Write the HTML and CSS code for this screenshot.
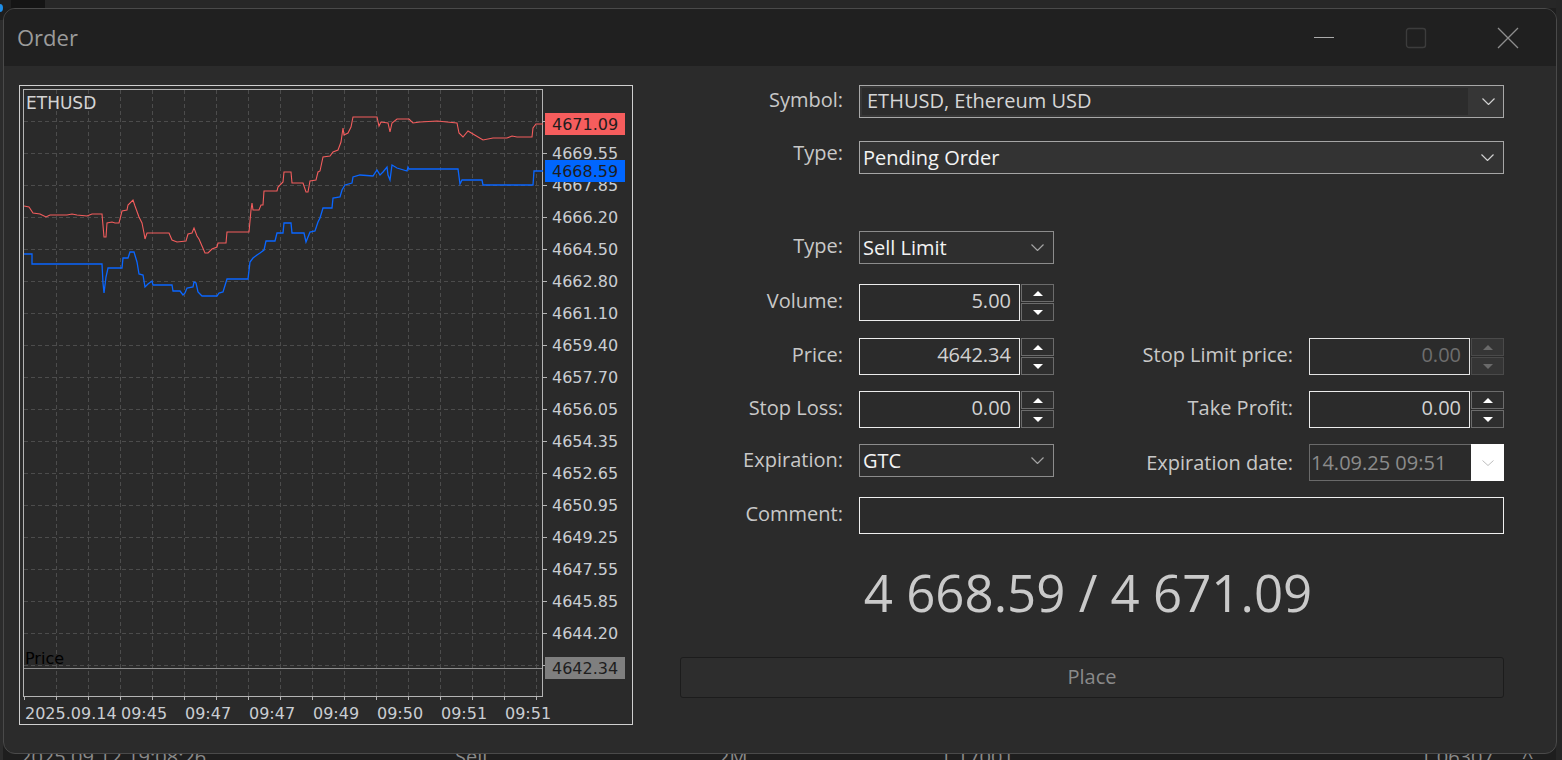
FILE: index.html
```html
<!DOCTYPE html>
<html lang="en">
<head>
<meta charset="utf-8">
<title>Order</title>
<link rel="stylesheet" href="styles.css">
</head>
<body>
<div class="desktop">
  <div class="bg-top"><span class="bg-dot"></span><span class="bg-dark"></span></div>
  <div class="bg-left"></div>
  <div class="bg-right"></div>
  <div class="bg-row">
    <span>2025.09.12 19:08:26</span>
    <span>Sell</span>
    <span>2M</span>
    <span>1.17001</span>
    <span>1.06307</span>
    <span>^</span>
  </div>
</div>

<div class="window">
  <div class="titlebar">
    <div class="title">Order</div>
    <div class="controls">
      <div class="ctl"><svg width="22" height="3" viewBox="0 0 22 3"><path class="ic-min" d="M1 1.5H21"/></svg></div>
      <div class="ctl"><svg width="22" height="22" viewBox="0 0 22 22"><rect class="ic-max" x="1.5" y="1.5" width="19" height="19" rx="2.5"/></svg></div>
      <div class="ctl"><svg width="22" height="22" viewBox="0 0 22 22"><path class="ic-close" d="M1 1L21 21M21 1L1 21"/></svg></div>
    </div>
  </div>

  <div class="content">
    <div class="chart">
      <svg width="615" height="641" viewBox="19 85 615 641">
        <rect class="c-frame" x="19.5" y="85.5" width="613" height="639"/>
        <path class="c-grid" d="M24 121.5H542M24 153.5H542M24 185.5H542M24 217.5H542M24 249.5H542M24 281.5H542M24 313.5H542M24 345.5H542M24 377.5H542M24 409.5H542M24 441.5H542M24 473.5H542M24 505.5H542M24 537.5H542M24 569.5H542M24 601.5H542M24 633.5H542M24 665.5H542"/>
        <path class="c-grid" d="M56.5 90V696M88.5 90V696M120.5 90V696M152.5 90V696M184.5 90V696M216.5 90V696M248.5 90V696M280.5 90V696M312.5 90V696M344.5 90V696M376.5 90V696M408.5 90V696M440.5 90V696M472.5 90V696M504.5 90V696M536.5 90V696"/>
        <rect class="c-plot" x="23.5" y="89.5" width="519" height="607"/>
        <path class="c-tick" d="M543 121.5h4M543 153.5h4M543 185.5h4M543 217.5h4M543 249.5h4M543 281.5h4M543 313.5h4M543 345.5h4M543 377.5h4M543 409.5h4M543 441.5h4M543 473.5h4M543 505.5h4M543 537.5h4M543 569.5h4M543 601.5h4M543 633.5h4M543 665.5h4"/>
        <path class="c-tick" d="M24.5 697v3M56.5 697v3M88.5 697v3M120.5 697v3M152.5 697v3M184.5 697v3M216.5 697v3M248.5 697v3M280.5 697v3M312.5 697v3M344.5 697v3M376.5 697v3M408.5 697v3M440.5 697v3M472.5 697v3M504.5 697v3M536.5 697v3"/>
        <path class="c-priceline" d="M24 668.5H542"/>

        <polyline class="c-ask" points="24,206 29,207 33,213 40,214 46,217 50,215 57,215 67,215 72,214 77,215 87,216 92,214 102,214 104,237 106,237 107,223 112,222 115,223 119,223 122,211 127,210 128,205 133,200 135,206 139,217 142,223 144,233 145,239 147,233 169,233 172,240 177,242 186,241 188,234 192,233 194,228 197,236 199,239 202,246 205,253 208,253 212,249 217,247 218,243 226,243 227,232 249,232 251,210 252,203 253,210 259,210 261,205 263,205 264,191 277,191 278,187 283,182 284,172 291,172 292,183 303,183 306,192 308,192 310,181 316,180 318,172 320,171 323,157 330,156 333,152 338,150 341,142 343,128 344,135 348,133 351,127 353,117 377,117 379,126 381,122 388,123 390,132 392,123 397,119 409,119 413,123 420,122 437,121 447,122 457,123 459,133 463,137 468,131 473,134 483,140 493,138 507,138 512,136 517,137 524,137 532,137 533,128 536,124 543,124"/>
        <polyline class="c-bid" points="24,254 32,254 32,264 102,264 103,283 104,293 106,277 108,268 122,268 123,258 128,258 130,252 134,252 137,262 139,274 143,275 145,287 148,284 152,281 153,285 172,285 173,291 180,291 183,295 185,293 187,288 193,287 194,282 196,283 198,292 202,296 217,296 219,293 223,292 227,279 248,279 250,262 253,258 257,255 260,253 264,250 266,241 275,241 277,233 283,233 284,223 291,223 292,233 304,233 306,242 310,232 315,231 318,222 320,218 323,208 332,208 333,198 340,197 342,190 345,185 352,183 353,177 360,175 373,176 377,170 380,175 383,172 387,167 388,175 390,180 392,165 397,168 407,171 408,167 409,169 458,169 460,184 462,180 482,180 483,185 533,185 534,171 543,171"/>

        <text class="c-sym" x="26" y="109">ETHUSD</text>
        <text class="c-pricelbl" x="25" y="664">Price</text>

        <text class="c-axis" x="552" y="159">4669.55</text>
        <text class="c-axis" x="552" y="191">4667.85</text>
        <text class="c-axis" x="552" y="223">4666.20</text>
        <text class="c-axis" x="552" y="255">4664.50</text>
        <text class="c-axis" x="552" y="287">4662.80</text>
        <text class="c-axis" x="552" y="319">4661.10</text>
        <text class="c-axis" x="552" y="351">4659.40</text>
        <text class="c-axis" x="552" y="383">4657.70</text>
        <text class="c-axis" x="552" y="415">4656.05</text>
        <text class="c-axis" x="552" y="447">4654.35</text>
        <text class="c-axis" x="552" y="479">4652.65</text>
        <text class="c-axis" x="552" y="511">4650.95</text>
        <text class="c-axis" x="552" y="543">4649.25</text>
        <text class="c-axis" x="552" y="575">4647.55</text>
        <text class="c-axis" x="552" y="607">4645.85</text>
        <text class="c-axis" x="552" y="639">4644.20</text>

        <rect class="c-box-ask" x="545" y="113" width="80" height="22"/>
        <text class="c-boxtxt" x="552" y="130">4671.09</text>
        <rect class="c-box-bid" x="545" y="160" width="80" height="22"/>
        <text class="c-boxtxt" x="552" y="177">4668.59</text>
        <rect class="c-box-pr" x="545" y="657" width="80" height="22"/>
        <text class="c-boxtxt" x="552" y="674">4642.34</text>

        <text class="c-axis" x="25" y="719">2025.09.14</text>
        <text class="c-axis" x="121" y="719">09:45</text>
        <text class="c-axis" x="185" y="719">09:47</text>
        <text class="c-axis" x="249" y="719">09:47</text>
        <text class="c-axis" x="313" y="719">09:49</text>
        <text class="c-axis" x="377" y="719">09:50</text>
        <text class="c-axis" x="441" y="719">09:51</text>
        <text class="c-axis" x="505" y="719">09:51</text>
      </svg>
    </div>

    <div class="form">
      <div class="row">
        <div class="lbl">Symbol:</div>
        <div class="sym-select wide">
          <div class="sym-val">ETHUSD, Ethereum USD</div>
          <div class="sym-btn"><svg class="chev" width="13" height="7" viewBox="0 0 13 7"><path d="M0.5 0.5L6.5 6.5L12.5 0.5"/></svg></div>
        </div>
      </div>

      <div class="row mt23">
        <div class="lbl lift">Type:</div>
        <div class="select big wide">
          <span class="sel-val">Pending Order</span>
          <svg class="chev" width="13" height="7" viewBox="0 0 13 7"><path d="M0.5 0.5L6.5 6.5L12.5 0.5"/></svg>
        </div>
      </div>

      <div class="row mt57">
        <div class="lbl">Type:</div>
        <div class="select small">
          <span class="sel-val">Sell Limit</span>
          <svg class="chev dim" width="13" height="7" viewBox="0 0 13 7"><path d="M0.5 0.5L6.5 6.5L12.5 0.5"/></svg>
        </div>
      </div>

      <div class="row mt20">
        <div class="lbl">Volume:</div>
        <div class="spin">
          <div class="num">5.00</div>
          <div class="arrows"><span class="arr up"></span><span class="arr dn"></span></div>
        </div>
      </div>

      <div class="row mt17">
        <div class="lbl">Price:</div>
        <div class="spin">
          <div class="num">4642.34</div>
          <div class="arrows"><span class="arr up"></span><span class="arr dn"></span></div>
        </div>
        <div class="lbl">Stop Limit price:</div>
        <div class="spin disabled">
          <div class="num">0.00</div>
          <div class="arrows"><span class="arr up"></span><span class="arr dn"></span></div>
        </div>
      </div>

      <div class="row mt16">
        <div class="lbl">Stop Loss:</div>
        <div class="spin">
          <div class="num">0.00</div>
          <div class="arrows"><span class="arr up"></span><span class="arr dn"></span></div>
        </div>
        <div class="lbl">Take Profit:</div>
        <div class="spin">
          <div class="num">0.00</div>
          <div class="arrows"><span class="arr up"></span><span class="arr dn"></span></div>
        </div>
      </div>

      <div class="row mt16 top">
        <div class="lbl exp-l">Expiration:</div>
        <div class="select small">
          <span class="sel-val">GTC</span>
          <svg class="chev dim" width="13" height="7" viewBox="0 0 13 7"><path d="M0.5 0.5L6.5 6.5L12.5 0.5"/></svg>
        </div>
        <div class="lbl exp-r">Expiration date:</div>
        <div class="expdate">
          <div class="exp-val">14.09.25 09:51</div>
          <div class="exp-btn"><svg class="chev light" width="12" height="6" viewBox="0 0 12 6"><path d="M0.5 0.5L6 5.5L11.5 0.5"/></svg></div>
        </div>
      </div>

      <div class="row mt16">
        <div class="lbl">Comment:</div>
        <div class="comment wide"></div>
      </div>

      <div class="quote">4 668.59 / 4 671.09</div>

      <div class="place">Place</div>
    </div>
  </div>
</div>
</body>
</html>
```

FILE: styles.css
```css
* { box-sizing: border-box; }

html, body {
  margin: 0;
  padding: 0;
}

body {
  width: 1562px;
  height: 760px;
  position: relative;
  overflow: hidden;
  background: #1e1e1e;
  font-family: "Open Sans", "Noto Sans", sans-serif;
}

/* ---------- desktop behind the dialog ---------- */
.desktop {
  position: absolute;
  inset: 0;
}

.bg-top {
  height: 8px;
  background: #272727;
  display: flex;
}

.bg-dot {
  width: 11px;
  background: #202020;
  position: relative;
}

.bg-dot::after {
  content: "";
  position: absolute;
  left: -3px;
  top: 4px;
  width: 6px;
  height: 8px;
  border-radius: 50%;
  background: #1e8ee8;
}

.bg-dark {
  width: 34px;
  background: #151515;
}

.bg-left {
  position: absolute;
  left: 0;
  top: 20px;
  width: 3px;
  height: 740px;
  background: #2c2c2c;
}

.bg-right {
  position: absolute;
  right: 0;
  top: 0;
  width: 6px;
  height: 760px;
  background: #262626;
}

.bg-row {
  position: absolute;
  left: 0;
  top: 747px;
  display: grid;
  grid-template-columns: 435px 263px 222px 480px 102px auto;
  padding-left: 20px;
  font-size: 20px;
  line-height: 20px;
  color: #8a8a8a;
  white-space: nowrap;
}

/* ---------- window ---------- */
.window {
  position: absolute;
  left: 3px;
  top: 8px;
  width: 1554px;
  height: 746px;
  border: 1px solid #4a4a4a;
  border-radius: 12px;
  background: #2b2b2b;
  overflow: hidden;
  display: flex;
  flex-direction: column;
  z-index: 1;
}

.titlebar {
  height: 57px;
  flex-shrink: 0;
  background: #202020;
  display: flex;
  align-items: center;
  padding-left: 13px;
  padding-right: 2px;
}

.title {
  flex: 1;
  font-size: 22px;
  color: #9b9b9b;
  padding-bottom: 2px;
}

.controls {
  display: flex;
  height: 100%;
}

.ctl {
  width: 92px;
  display: flex;
  align-items: center;
  justify-content: center;
}

.ctl svg { display: block; }

.ic-min { stroke: #ababab; stroke-width: 1.2; fill: none; }
.ic-max { stroke: #3c3c3c; stroke-width: 1.4; fill: none; }
.ic-close { stroke: #8e8e8e; stroke-width: 1.3; fill: none; }

.content {
  flex: 1;
  display: flex;
  padding: 19px 0 0 15px;
}

/* ---------- chart ---------- */
.chart {
  width: 615px;
  height: 641px;
  flex-shrink: 0;
}

.chart svg { display: block; }

.c-frame { fill: #2a2a2a; stroke: #cfcfcf; stroke-width: 1; }
.c-plot { fill: none; stroke: #b4b4b4; stroke-width: 1; }
.c-grid { fill: none; stroke: #4c4c4c; stroke-width: 1; stroke-dasharray: 4 3; }
.c-tick { fill: none; stroke: #b4b4b4; stroke-width: 1; }
.c-priceline { fill: none; stroke: #8e8e8e; stroke-width: 1; }
.c-ask { fill: none; stroke: #f35d5d; stroke-width: 1.1; stroke-linejoin: miter; }
.c-bid { fill: none; stroke: #0a66ff; stroke-width: 1.3; stroke-linejoin: miter; }

.c-sym { fill: #d4d4d4; font-family: "DejaVu Sans", sans-serif; font-size: 17px; }
.c-pricelbl { fill: #000000; font-family: "DejaVu Sans", sans-serif; font-size: 16px; }
.c-axis { fill: #c9cdd2; font-family: "DejaVu Sans", sans-serif; font-size: 16px; }
.c-boxtxt { fill: #1e1e1e; font-family: "DejaVu Sans", sans-serif; font-size: 16px; }
.c-box-ask { fill: #f65d5d; }
.c-box-bid { fill: #0066ff; }
.c-box-pr { fill: #7f7f7f; }

/* ---------- form ---------- */
.form {
  margin-left: 46px;
  width: 824px;
  display: flex;
  flex-direction: column;
}

.row {
  display: grid;
  grid-template-columns: 163px 195px 223px 195px;
  column-gap: 16px;
}

.row.top { align-items: start; }

.mt16 { margin-top: 16px; }
.mt17 { margin-top: 17px; }
.mt20 { margin-top: 20px; }
.mt23 { margin-top: 23px; }
.mt57 { margin-top: 57px; }

.lbl {
  display: flex;
  align-items: center;
  justify-content: flex-end;
  align-self: stretch;
  padding-bottom: 4px;
  font-size: 20px;
  line-height: 20px;
  color: #c8c8c8;
  white-space: nowrap;
}

.lbl.lift { padding-bottom: 10px; }
.lbl.exp-l { padding-bottom: 6px; }
.lbl.exp-r { padding-bottom: 0; }

.wide { grid-column: 2 / 5; }

/* symbol combobox */
.sym-select {
  height: 33px;
  border: 1px solid #a8a8a8;
  background: #363636;
  padding: 2px 0 2px 2px;
  display: flex;
}

.sym-val {
  flex: 1;
  background: #2c2c2c;
  font-size: 20px;
  line-height: 20px;
  color: #d6d6d6;
  padding-left: 5px;
  padding-bottom: 1px;
  display: flex;
  align-items: center;
  white-space: nowrap;
}

.sym-btn {
  width: 35px;
  display: flex;
  align-items: center;
  justify-content: flex-end;
  padding-right: 8px;
}

/* dropdowns */
.select {
  height: 33px;
  display: flex;
  align-items: center;
  justify-content: space-between;
  padding: 0 9px 0 3px;
  font-size: 20px;
  line-height: 20px;
  white-space: nowrap;
}

.select.big {
  background: #333333;
  border: 1px solid #a6a6a6;
}

.select.small {
  background: #2e2e2e;
  border: 1px solid #8c8c8c;
}

.sel-val { color: #f3f3f3; }

.chev { display: block; fill: none; stroke: #d0d0d0; stroke-width: 1.2; }
.chev.dim { stroke: #a4a4a4; }
.chev.light { stroke: #bdbdbd; stroke-width: 1; }

/* spin inputs */
.spin {
  height: 37px;
  display: flex;
  gap: 1px;
}

.num {
  width: 161px;
  border: 1px solid #ececec;
  background: #2b2b2b;
  text-align: right;
  padding-right: 8px;
  font-size: 20px;
  line-height: 32px;
  color: #d2d2d2;
}

.arrows {
  width: 33px;
  display: flex;
  flex-direction: column;
  gap: 1px;
}

.arr {
  flex: 1;
  border: 1px solid #6c6c6c;
  background: #2e2e2e;
  display: flex;
  align-items: center;
  justify-content: center;
}

.arr::before {
  content: "";
  width: 0;
  height: 0;
  border-left: 5px solid transparent;
  border-right: 5px solid transparent;
}

.arr.up::before { border-bottom: 5px solid #ffffff; }
.arr.dn::before { border-top: 5px solid #ffffff; }

.spin.disabled .num { color: #6e6e6e; border-color: #e4e4e4; }
.spin.disabled .arr { border-color: #4a4a4a; background: #353535; }
.spin.disabled .arr.up::before { border-bottom-color: #6a6a6a; }
.spin.disabled .arr.dn::before { border-top-color: #6a6a6a; }

/* expiration date */
.expdate {
  height: 37px;
  display: flex;
}

.exp-val {
  flex: 1;
  border: 1px solid #6a6a6a;
  border-right: none;
  padding-left: 1px;
  font-size: 20px;
  line-height: 35px;
  color: #8c8c8c;
  white-space: nowrap;
}

.exp-btn {
  width: 33px;
  background: #ffffff;
  display: flex;
  align-items: center;
  justify-content: center;
}

/* comment */
.comment {
  height: 37px;
  border: 1px solid #f0f0f0;
  background: #2b2b2b;
}

/* quote */
.quote {
  margin-top: 28px;
  height: 60px;
  line-height: 60px;
  font-size: 51px;
  color: #cacaca;
  text-align: center;
  padding-right: 8px;
  white-space: nowrap;
}

/* place button */
.place {
  margin-top: 35px;
  height: 41px;
  border: 1px solid #1c1c1c;
  border-radius: 3px;
  background: #2d2d2d;
  display: flex;
  align-items: center;
  justify-content: center;
  padding-bottom: 1px;
  font-size: 20px;
  line-height: 20px;
  color: #8a8a8a;
}
```
